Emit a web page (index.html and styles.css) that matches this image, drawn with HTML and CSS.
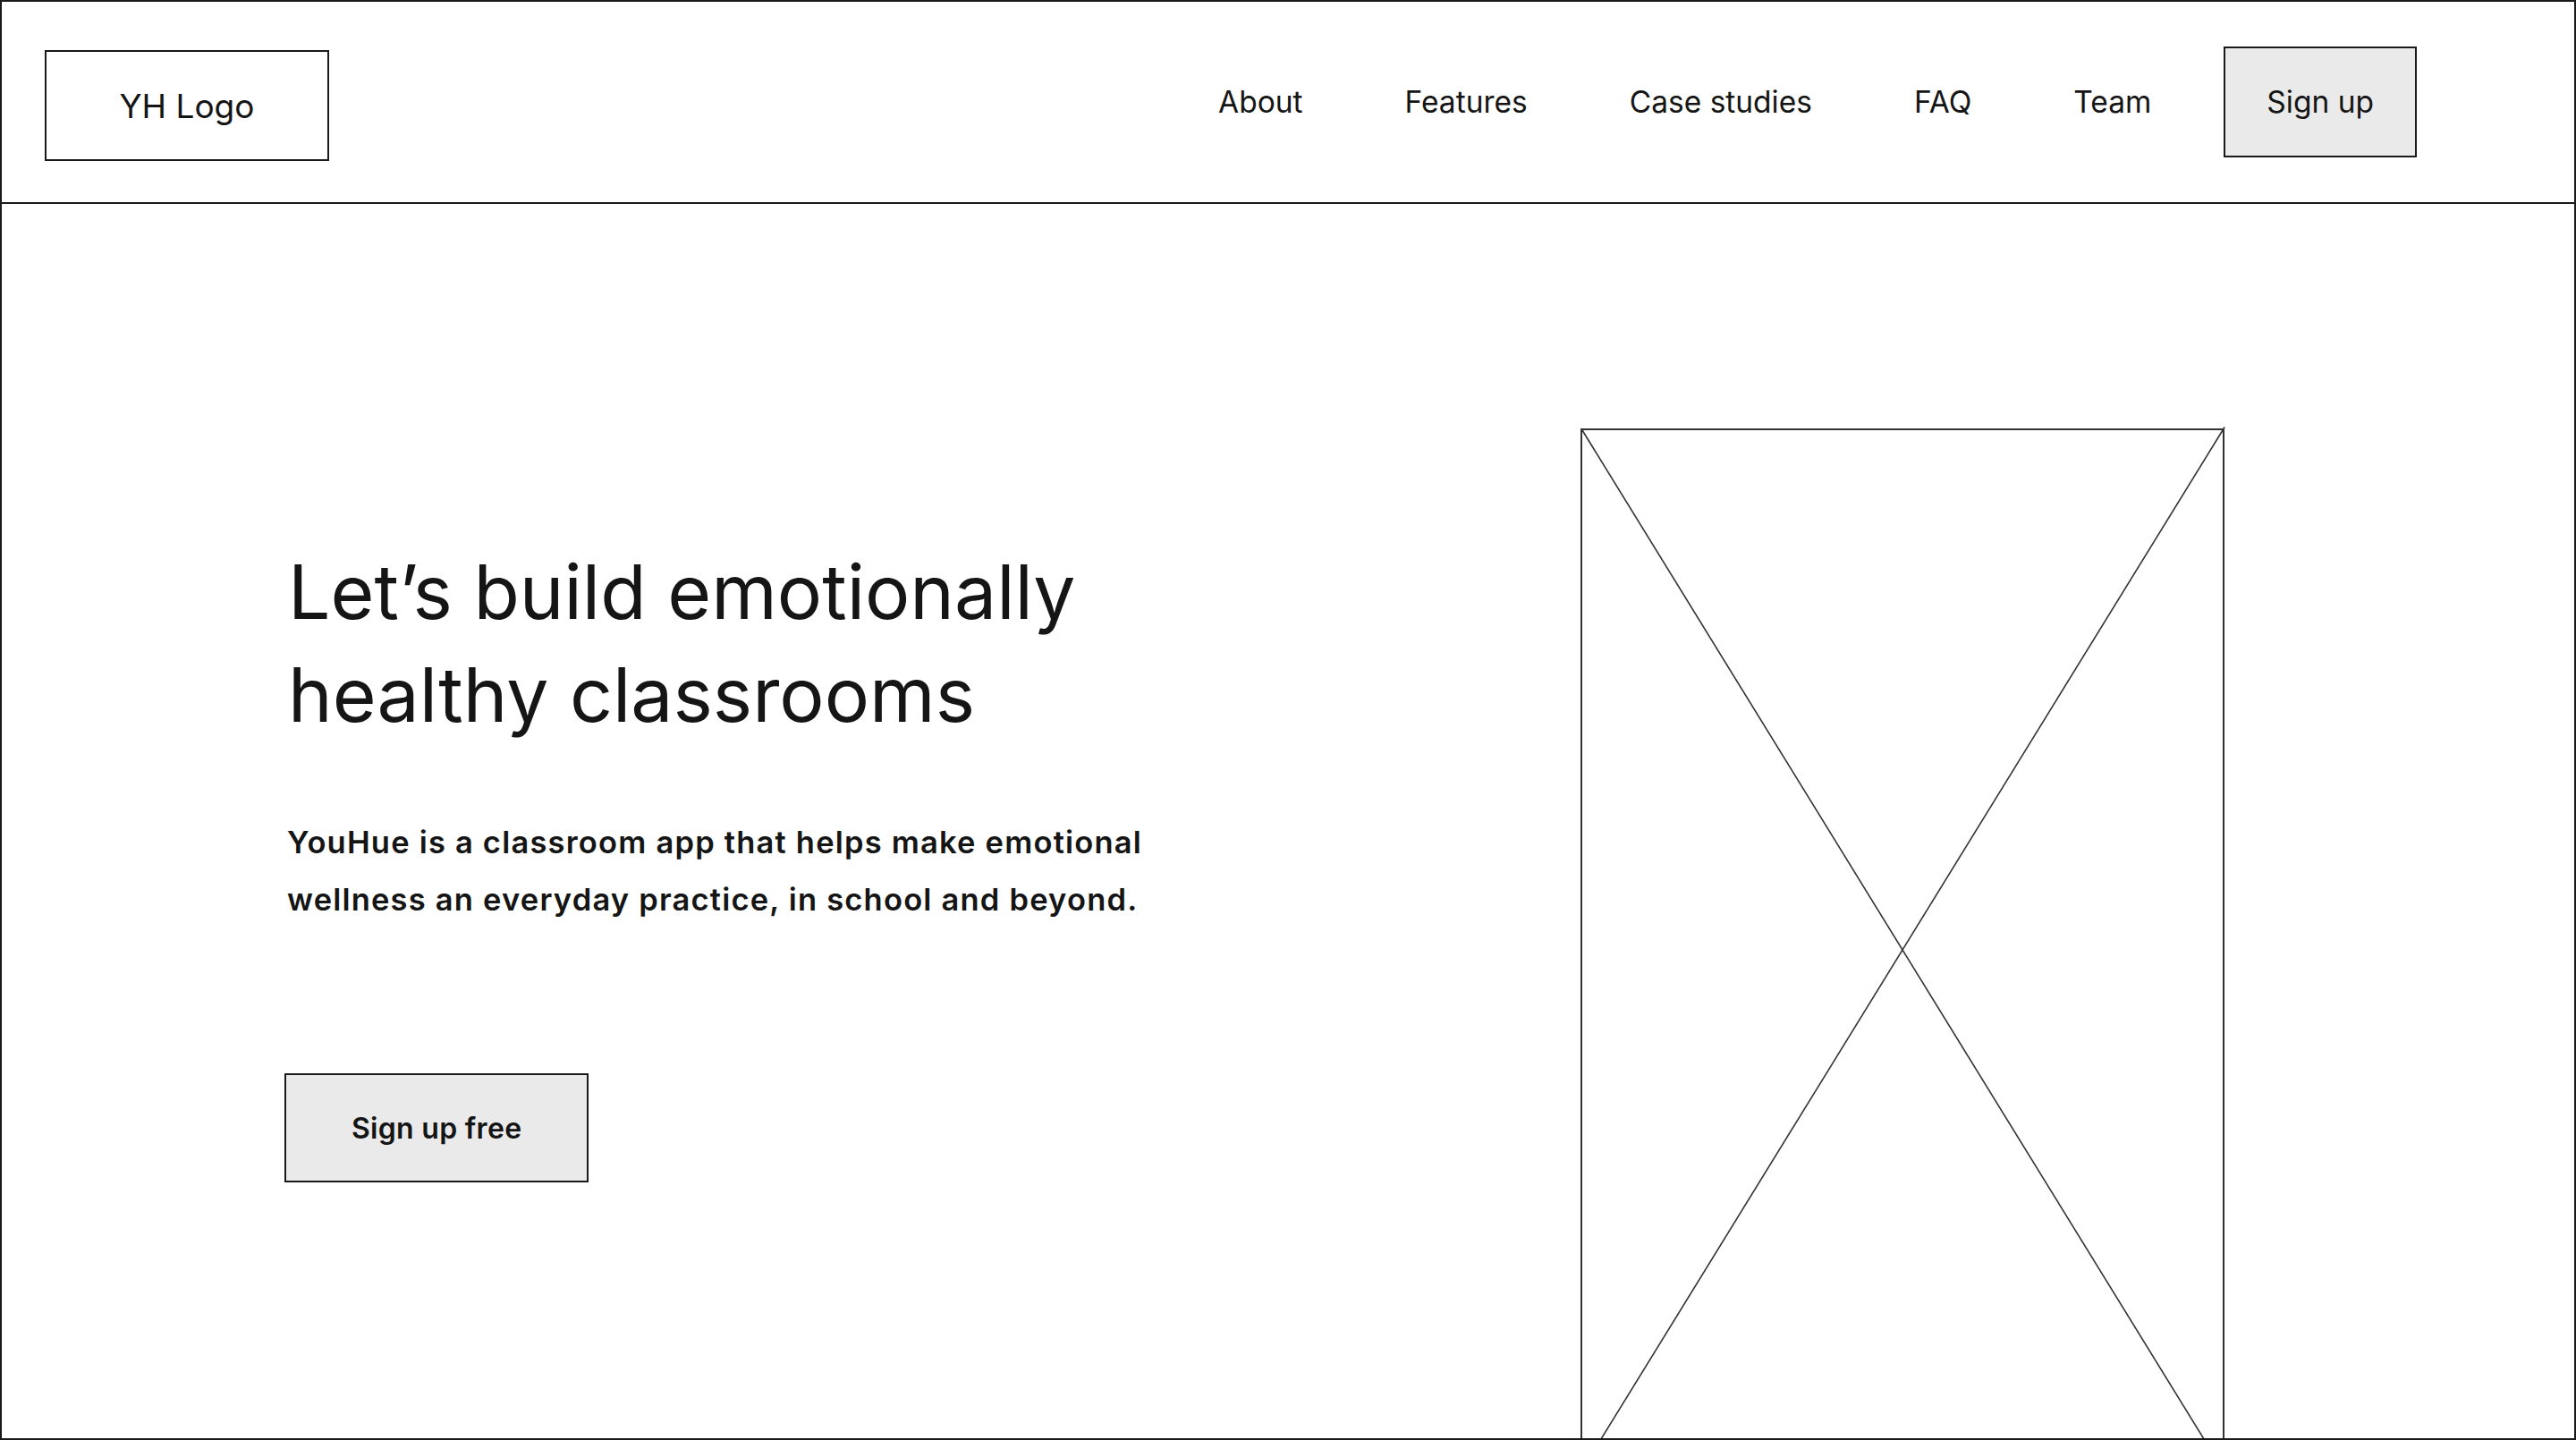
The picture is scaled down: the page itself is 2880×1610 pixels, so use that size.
FILE: index.html
```html
<!DOCTYPE html>
<html lang="en">
<head>
<meta charset="utf-8">
<title>YouHue</title>
<link rel="stylesheet" href="styles.css">
</head>
<body>
<div class="page">
  <header class="header">
    <div class="logo">YH Logo</div>
    <nav class="nav">
      <a class="nav-link" href="#">About</a>
      <a class="nav-link" href="#">Features</a>
      <a class="nav-link" href="#">Case studies</a>
      <a class="nav-link" href="#">FAQ</a>
      <a class="nav-link" href="#">Team</a>
    </nav>
    <a class="btn btn-nav" href="#">Sign up</a>
  </header>
  <main class="hero">
    <div class="hero-copy">
      <h1 class="hero-title">Let’s build emotionally<br>healthy classrooms</h1>
      <p class="hero-text">YouHue is a classroom app that helps make emotional<br>wellness an everyday practice, in school and beyond.</p>
      <a class="btn btn-cta" href="#">Sign up free</a>
    </div>
    <div class="placeholder">
      <svg class="placeholder-x" viewBox="0 0 100 100" preserveAspectRatio="none">
        <line x1="0" y1="0" x2="100" y2="100" vector-effect="non-scaling-stroke"/>
        <line x1="100.3" y1="-0.3" x2="0" y2="100" vector-effect="non-scaling-stroke"/>
      </svg>
    </div>
  </main>
</div>
</body>
</html>
```

FILE: styles.css
```css
* { box-sizing: border-box; }

html, body {
  margin: 0;
  padding: 0;
  background: #ffffff;
}

body {
  font-family: "Inter", "Lato", "Liberation Sans", sans-serif;
  color: #151515;
}

a { color: inherit; text-decoration: none; }

.page {
  width: 100vw;
  height: 100vh;
  border: 2px solid #1a1a1a;
  display: flex;
  flex-direction: column;
  overflow: hidden;
}

.header {
  flex: 0 0 auto;
  height: 226px;
  border-bottom: 2px solid #1a1a1a;
  padding: 0 176px 0 48px;
  display: flex;
  align-items: center;
}

.logo {
  width: 318px;
  height: 124px;
  margin-top: 8px;
  border: 2px solid #1a1a1a;
  display: flex;
  align-items: center;
  justify-content: center;
  font-size: 37px;
  font-weight: 400;
}

.nav {
  margin-left: auto;
  display: flex;
  align-items: center;
  gap: 114px;
}

.nav-link {
  font-size: 33.5px;
  font-weight: 400;
}

.btn {
  display: flex;
  align-items: center;
  justify-content: center;
  border: 2px solid #1a1a1a;
  background: #eaeaea;
}

.btn-nav {
  margin-left: 81px;
  height: 124px;
  padding: 0 46px;
  font-size: 33.5px;
  font-weight: 400;
}

.hero {
  flex: 1 1 auto;
  min-height: 0;
  display: flex;
  justify-content: space-between;
  align-items: flex-start;
  padding: 251px 391px 0 316px;
  overflow: hidden;
}

.hero-copy {
  margin-top: 125px;
  display: flex;
  flex-direction: column;
  align-items: flex-start;
}

.hero-title {
  margin: 0;
  font-size: 84px;
  font-weight: 400;
  line-height: 115px;
  padding-left: 4px;
}

.hero-text {
  margin: 76px 0 0;
  font-size: 34.5px;
  font-weight: 600;
  letter-spacing: 1.2px;
  line-height: 64px;
  padding-left: 3px;
}

.btn-cta {
  margin-top: 162px;
  height: 122px;
  padding: 0 73px;
  font-size: 32px;
  font-weight: 600;
  letter-spacing: 0.3px;
}

.placeholder {
  flex: 0 0 auto;
  width: 720px;
  height: 1166px;
  border: 2px solid #333333;
  position: relative;
}

.placeholder-x {
  position: absolute;
  inset: 0;
  width: 100%;
  height: 100%;
  overflow: visible;
}

.placeholder-x line {
  stroke: #333333;
  stroke-width: 1.6;
}
```
